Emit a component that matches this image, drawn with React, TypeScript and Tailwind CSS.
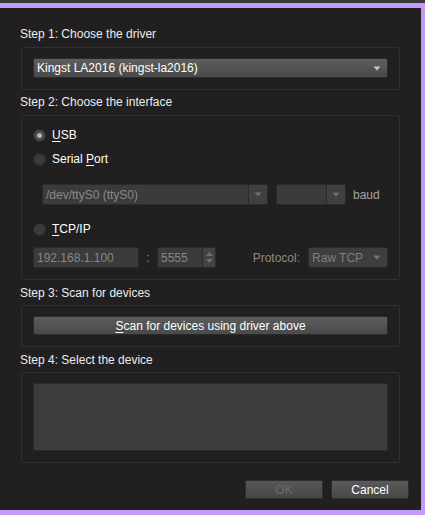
import React from "react";

const Arrow = ({ color = "#c8c8c8" }: { color?: string }) => (
  <svg width="8" height="5" viewBox="0 0 8 5">
    <path d="M0.5 0.5 L7.5 0.5 L4 4.5 Z" fill={color} />
  </svg>
);

const Radio = ({ checked }: { checked?: boolean }) => (
  <div
    className={
      checked
        ? "w-[13px] h-[13px] rounded-full border border-[#2a2a2a] bg-[#4a4a4a] flex items-center justify-center"
        : "w-[13px] h-[13px] rounded-full border border-[#2c2c2c] bg-[#3a3a3a]"
    }
  >
    {checked && <div className="w-[5px] h-[5px] rounded-full bg-[#b4b4b4]" />}
  </div>
);

const DisabledCombo = ({ text, className }: { text?: string; className: string }) => (
  <div
    className={
      "flex h-[21px] rounded-[2px] border border-[#2a2a2a] bg-[#3b3b3b] " + className
    }
  >
    <div className="flex-1 flex items-center pl-[3px] text-[#8a8a8a] truncate">{text}</div>
    <div className="w-[19px] border-l border-[#2a2a2a] bg-[#404040] flex items-center justify-center">
      <Arrow color="#6e6e6e" />
    </div>
  </div>
);

export default function App() {
  return (
    <div className="w-[425px] h-[515px] flex flex-col font-['Liberation_Sans',Arial,sans-serif] text-[12px] leading-[14px]">
      <div className="h-[3px] bg-[#3a393a]" />
      <div className="h-[5px] bg-[#c29bf6]" />
      <div className="flex flex-1 min-h-0">
        <div className="flex-1 bg-[#211f20] pl-[20px] pr-[12px] pt-[19px] flex flex-col">
          {/* Step 1 */}
          <div className="h-[14px] text-[#ececec]">Step 1: Choose the driver</div>
          <div className="mt-[6px] ml-[1px] mr-[9px] h-[43px] rounded-[3px] border border-[#312f30] px-[11px] pt-[10px]">
            <div className="h-[20px] rounded-[2px] border border-[#2b2b2b] bg-gradient-to-b from-[#5e5e5e] to-[#4a4a4a] flex items-center pl-[3px] pr-[6px] text-white">
              <span className="flex-1">Kingst LA2016 (kingst-la2016)</span>
              <Arrow />
            </div>
          </div>

          {/* Step 2 */}
          <div className="mt-[5px] h-[14px] text-[#ececec]">Step 2: Choose the interface</div>
          <div className="mt-[6px] ml-[1px] mr-[9px] h-[165px] rounded-[3px] border border-[#312f30] px-[11px] pt-[7px] flex flex-col">
            <div className="h-[24px] flex items-center gap-[6px] text-white">
              <Radio checked />
              <span>
                <span className="underline underline-offset-2">U</span>SB
              </span>
            </div>
            <div className="h-[24px] flex items-center gap-[6px] text-white">
              <Radio />
              <span>
                Serial <span className="underline underline-offset-2">P</span>ort
              </span>
            </div>
            <div className="mt-[13px] ml-[9px] flex items-center">
              <DisabledCombo text="/dev/ttyS0 (ttyS0)" className="w-[226px]" />
              <DisabledCombo className="w-[70px] ml-[8px]" />
              <span className="ml-[7px] text-[#a4a4a4]">baud</span>
            </div>
            <div className="mt-[12px] h-[24px] flex items-center gap-[6px] text-white">
              <Radio />
              <span>
                <span className="underline underline-offset-2">T</span>CP/IP
              </span>
            </div>
            <div className="mt-[6px] flex items-center h-[21px]">
              <div className="w-[106px] h-[21px] rounded-[2px] border border-[#2a2a2a] bg-[#3b3b3b] flex items-center pl-[3px] text-[#878787]">
                192.168.1.100
              </div>
              <div className="w-[18px] text-center text-[#8a8a8a]">:</div>
              <div className="w-[59px] h-[21px] rounded-[2px] border border-[#2a2a2a] bg-[#3b3b3b] flex">
                <div className="flex-1 flex items-center pl-[3px] text-[#878787]">5555</div>
                <div className="w-[13px] border-l border-[#2a2a2a] bg-[#434343] flex flex-col items-center justify-center gap-[3px]">
                  <svg width="7" height="4" viewBox="0 0 7 4">
                    <path d="M0 4 L7 4 L3.5 0 Z" fill="#6e6e6e" />
                  </svg>
                  <svg width="7" height="4" viewBox="0 0 7 4">
                    <path d="M0 0 L7 0 L3.5 4 Z" fill="#6e6e6e" />
                  </svg>
                </div>
              </div>
              <div className="flex-1" />
              <span className="text-[#8a8a8a]">Protocol:</span>
              <div className="ml-[8px] w-[80px] h-[21px] rounded-[2px] border border-[#2a2a2a] bg-[#3e3e3e] flex items-center pl-[3px] pr-[6px] text-[#7e7e7e]">
                <span className="flex-1">Raw TCP</span>
                <Arrow color="#777777" />
              </div>
            </div>
          </div>

          {/* Step 3 */}
          <div className="mt-[6px] h-[14px] text-[#ececec]">Step 3: Scan for devices</div>
          <div className="mt-[5px] ml-[1px] mr-[9px] h-[42px] rounded-[3px] border border-[#312f30] px-[11px] pt-[10px]">
            <div className="h-[19px] rounded-[2px] border border-[#2b2b2b] bg-gradient-to-b from-[#5c5c5c] to-[#4a4a4a] flex items-center justify-center text-white">
              <span>
                <span className="underline underline-offset-2">S</span>can for devices using driver above
              </span>
            </div>
          </div>

          {/* Step 4 */}
          <div className="mt-[6px] h-[14px] text-[#ececec]">Step 4: Select the device</div>
          <div className="mt-[5px] ml-[1px] mr-[9px] h-[91px] rounded-[3px] border border-[#312f30] px-[11px] pt-[10px]">
            <div className="h-[68px] border border-[#2a2a2a] bg-[#3d3d3d]" />
          </div>

          {/* Buttons */}
          <div className="mt-[17px] flex justify-end gap-[8px]">
            <div className="w-[78px] h-[19px] rounded-[2px] border border-[#2e2e2e] bg-gradient-to-b from-[#575757] to-[#474747] flex items-center justify-center text-[#6c6c6c]">
              OK
            </div>
            <div className="w-[78px] h-[19px] rounded-[2px] border border-[#2e2e2e] bg-gradient-to-b from-[#5a5a5a] to-[#484848] flex items-center justify-center text-white">
              Cancel
            </div>
          </div>
        </div>
        <div className="w-[4px] bg-[#c29bf6]" />
      </div>
      <div className="h-[5px] bg-[#c29bf6]" />
    </div>
  );
}
